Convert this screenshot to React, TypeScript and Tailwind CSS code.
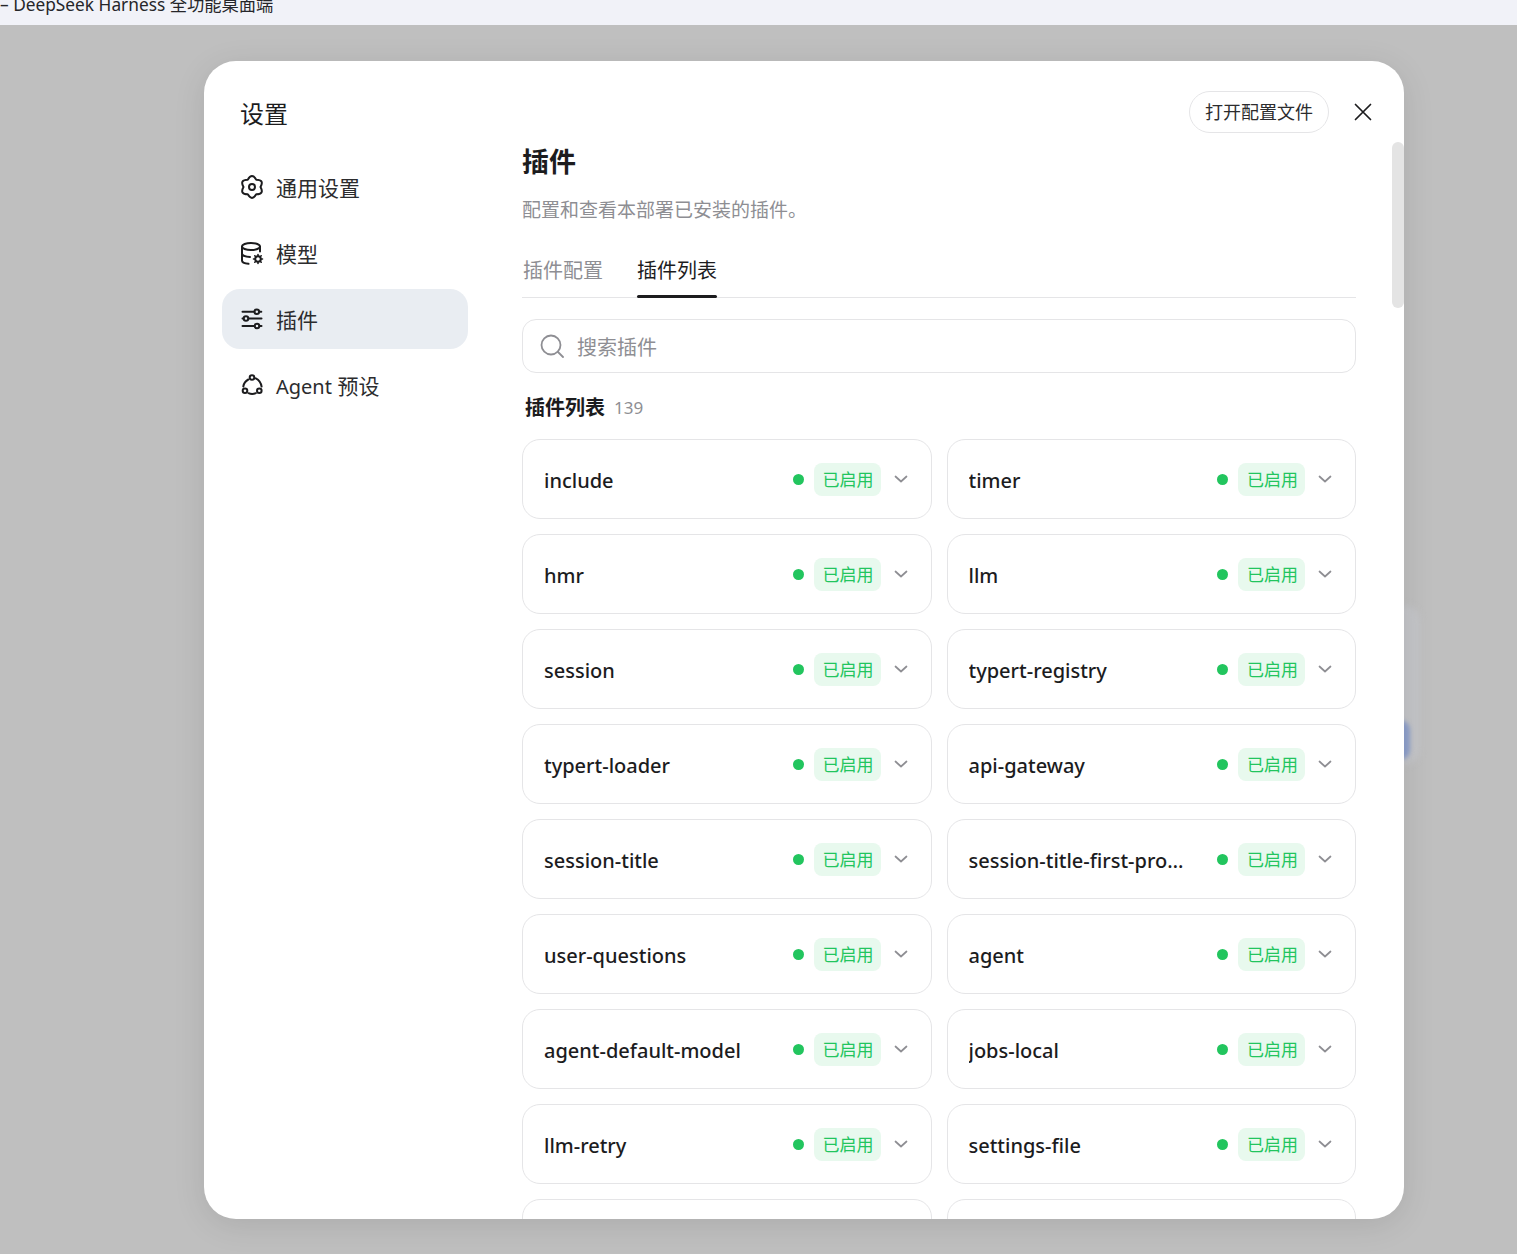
const plugins = [
  'include',
  'timer',
  'hmr',
  'llm',
  'session',
  'typert-registry',
  'typert-loader',
  'api-gateway',
  'session-title',
  'session-title-first-prompt',
  'user-questions',
  'agent',
  'agent-default-model',
  'jobs-local',
  'llm-retry',
  'settings-file',
  '',
  '',
]

function GearIcon() {
  return (
    <svg width="24" height="24" viewBox="0 0 24 24" fill="none" stroke="currentColor" strokeWidth="2" strokeLinejoin="round">
      <path d="M7.750 4.640Q12-2.500 16.250 4.640Q24.560 4.750 20.500 12Q24.560 19.250 16.250 19.360Q12 26.500 7.750 19.360Q-.560 19.250 3.500 12Q-.560 4.750 7.750 4.640Z" />
      <circle cx="12" cy="12" r="3" />
    </svg>
  )
}

function ModelIcon() {
  return (
    <svg width="24" height="24" viewBox="0 0 24 24" fill="none" stroke="currentColor" strokeWidth="2" strokeLinecap="round">
      <ellipse cx="11" cy="5.500" rx="9" ry="3.500" />
      <path d="M2 5.500v14c0 1.600 2.800 3 6.500 3.300M20 5.500v5M2 12.500c0 1.800 3.500 3.300 8 3.500" />
      <circle cx="18" cy="18" r="2.800" />
      <path d="M18 13.500v1.500M18 21v1.500M13.500 18H15M21 18h1.500M14.800 14.800l1 1M20.200 20.200l1 1M21.200 14.800l-1 1M15.800 20.200l-1 1" strokeWidth="1.600" />
    </svg>
  )
}

function SlidersIcon() {
  return (
    <svg width="24" height="24" viewBox="0 0 24 24" fill="none" stroke="currentColor" strokeWidth="2" strokeLinecap="round">
      <path d="M2.500 4.700H14.300M19.300 4.700h2M2.500 11.500h1M8.500 11.500H21.500M2.500 19H14.500M19.500 19h2" />
      <circle cx="16.800" cy="4.700" r="2.300" />
      <circle cx="6" cy="11.500" r="2.300" />
      <circle cx="17" cy="19" r="2.300" />
    </svg>
  )
}

function AgentIcon() {
  return (
    <svg width="24" height="24" viewBox="0 0 24 24" fill="none" stroke="currentColor" strokeWidth="2" strokeLinecap="round">
      <circle cx="12" cy="4.500" r="2.300" />
      <circle cx="5" cy="17.800" r="2.300" />
      <circle cx="19.300" cy="17.800" r="2.300" />
      <path d="M8.300 6.500C5.500 8 3.800 10.500 3.300 13.500M15.800 5.300c3 1.500 5.200 4.500 5.800 8.300M8.500 20.200c2.300 1 5 1 7.300 0" />
    </svg>
  )
}

const navItems = [
  { label: <>通用设置</>, icon: <GearIcon /> },
  { label: <>模型</>, icon: <ModelIcon /> },
  { label: <>插件</>, icon: <SlidersIcon />, active: true },
  { label: <><span className="text-[20px]">Agent</span> 预设</>, icon: <AgentIcon /> },
]

function PluginCard({ name }: { name: string }) {
  return (
    <div className="flex h-20 items-center rounded-[18px] border border-[#e5e5e7] bg-white pl-[21px] pr-[22px]">
      <span className="min-w-0 max-w-[220px] flex-1 truncate pt-[4px] text-[20px] font-medium text-[#1c1c1e]">{name}</span>
      {name && (
        <div className="ml-auto flex items-center">
          <span className="size-[11px] rounded-full bg-[#22c55e]" />
          <span className="ml-[10px] flex h-[33px] w-[67px] items-center justify-center rounded-lg bg-[#e8f9ee] pl-[2px] pt-[2px] text-[17px] text-[#22c55e]">
            已启用
          </span>
          <svg className="ml-[12px] text-[#8e8e93]" width="16" height="16" viewBox="0 0 16 16" fill="none" stroke="currentColor" strokeWidth="1.700" strokeLinecap="round" strokeLinejoin="round">
            <path d="M2.500 5.500 8 10.500l5.500-5" />
          </svg>
        </div>
      )}
    </div>
  )
}

export default function App() {
  return (
    <div className="flex h-screen flex-col overflow-hidden bg-[#bfbfbf] font-['Noto_Sans','Noto_Sans_CJK_SC',sans-serif]">
      <div className="h-[25px] shrink-0 overflow-hidden bg-[#f1f2f8]">
        <div className="-mt-[7px] whitespace-nowrap text-[17.3px] leading-6 text-[#26262a]">– DeepSeek Harness 全功能桌面端</div>
      </div>

      <div className="relative flex-1 pl-[204px] pt-9">
        {/* blurred window behind the overlay */}
        <div className="absolute left-[1380px] top-[580px] h-[160px] w-[40px] rounded-2xl bg-[#c4c5c8] blur-[3px]" />
        <div className="absolute left-[1390px] top-[695px] h-10 w-[20px] rounded-full bg-[#8d9fcb] blur-[2px]" />

        <div className="relative flex h-[1158px] w-[1200px] overflow-hidden rounded-[32px] bg-white shadow-[0_6px_32px_rgba(0,0,0,0.1)]">
          <aside className="w-[318px] shrink-0 pl-[18px] pr-[54px] pt-[35px]">
            <h1 className="pl-[18px] text-[24px] leading-9 text-[#1c1c1e]">设置</h1>
            <nav className="mt-[25px] flex flex-col gap-[6px]">
              {navItems.map((item, i) => (
                <div
                  key={i}
                  className={`flex h-[60px] items-center gap-3 rounded-[18px] pl-[18px] text-[21px] text-[#2c2c2e] ${item.active ? 'bg-[#e9edf2]' : ''}`}
                >
                  <span className="text-[#1c1c1e]">{item.icon}</span>
                  <span className="pt-[4px]">{item.label}</span>
                </div>
              ))}
            </nav>
          </aside>

          <main className="flex min-w-0 flex-1 flex-col">
            <div className="flex h-[81px] shrink-0 items-start justify-end pr-[30px] pt-[30px]">
              <button className="mr-px h-[42px] w-[140px] rounded-full border border-[#e5e5e7] text-[18px] text-[#2c2c2e]">打开配置文件</button>
              <svg className="ml-[22px] mt-[10px] text-[#1c1c1e]" width="22" height="22" viewBox="0 0 22 22" fill="none" stroke="currentColor" strokeWidth="1.700" strokeLinecap="round">
                <path d="M3.500 3.500l15 15M18.500 3.500l-15 15" />
              </svg>
            </div>

            <div className="relative min-h-0 flex-1 overflow-hidden pr-[48px]">
              <div className="absolute right-0 top-0 h-[166px] w-3 rounded-full bg-[#e4e4e4]" />

              <h2 className="text-[27px] font-bold leading-10 text-[#1c1c1e]">插件</h2>
              <p className="mt-[14px] text-[19px] leading-7 text-[#8e8e93]">配置和查看本部署已安装的插件。</p>

              <div className="mt-[24px] flex border-b border-[#e5e5e7] text-[20px]">
                <div className="w-[115px] pb-[10px] pl-px pt-[7px] leading-8 text-[#8e8e93]">插件配置</div>
                <div className="relative w-20 pb-[10px] pt-[7px] text-center leading-8 text-[#1c1c1e]">
                  插件列表
                  <div className="absolute -bottom-px left-0 h-[3px] w-full rounded-full bg-[#1c1c1e]" />
                </div>
              </div>

              <div className="mt-[21px] flex h-[54px] items-center rounded-[14px] border border-[#e5e5e7] pl-[17px]">
                <svg className="text-[#8e8e93]" width="24" height="24" viewBox="0 0 24 24" fill="none" stroke="currentColor" strokeWidth="1.800" strokeLinecap="round">
                  <circle cx="11" cy="11" r="9.500" />
                  <path d="M18 18l5 5" />
                </svg>
                <span className="ml-[13px] pt-[4px] text-[20px] text-[#8e8e93]">搜索插件</span>
              </div>

              <div className="mt-[19px] flex items-center gap-[9px] pl-[3px] leading-8">
                <span className="text-[20px] font-bold text-[#1c1c1e]">插件列表</span>
                <span className="text-[17px] text-[#8e8e93]">139</span>
              </div>

              <div className="mt-[15px] grid grid-cols-2 gap-x-[15px] gap-y-[15px]">
                {plugins.map((name, i) => (
                  <PluginCard key={i} name={name} />
                ))}
              </div>
            </div>
          </main>
        </div>
      </div>
    </div>
  )
}
